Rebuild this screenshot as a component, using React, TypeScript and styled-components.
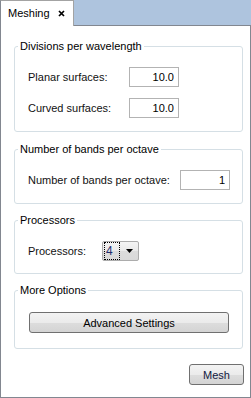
import styled, {createGlobalStyle} from 'styled-components'

const Global = createGlobalStyle`
body {
    margin: 0;
    background: #fff;
    font-family: "Liberation Sans", Arial, sans-serif;
    font-size: 11px;
    color: #000;
}
`

const App = () => {
    return (
        <>
        <Global />
        <Window>
            <TabBar>
                <Tab>
                    <span>Meshing</span>
                    <Close viewBox="0 0 7 7" width="7" height="7">
                        <path d="M1 1 L6 6 M6 1 L1 6" stroke="#000" strokeWidth="1.7" />
                    </Close>
                </Tab>
                <TabFiller />
            </TabBar>
            <Panel>
                <Group>
                    <Legend>Divisions per wavelength</Legend>
                    <Body pt={14} pb={13}>
                        <Row>
                            <Label w={101}>Planar surfaces:</Label>
                            <NumberBox readOnly value="10.0" />
                        </Row>
                        <Row>
                            <Label w={101}>Curved surfaces:</Label>
                            <NumberBox readOnly value="10.0" />
                        </Row>
                    </Body>
                </Group>
                <Group>
                    <Legend>Number of bands per octave</Legend>
                    <Body pt={14} pb={13}>
                        <Row>
                            <Label w={152}>Number of bands per octave:</Label>
                            <NumberBox readOnly value="1" />
                        </Row>
                    </Body>
                </Group>
                <Group>
                    <Legend>Processors</Legend>
                    <Body pt={14} pb={12}>
                        <Row>
                            <Label w={74}>Processors:</Label>
                            <Combo>
                                <ComboValue>4</ComboValue>
                                <svg width="7" height="4" viewBox="0 0 7 4">
                                    <path d="M0 0 H7 L3.5 4 Z" fill="#000" />
                                </svg>
                            </Combo>
                        </Row>
                    </Body>
                </Group>
                <Group>
                    <Legend>More Options</Legend>
                    <Body pt={15} pb={15}>
                        <WideButton>Advanced Settings</WideButton>
                    </Body>
                </Group>
                <Footer>
                    <MeshButton>Mesh</MeshButton>
                </Footer>
            </Panel>
        </Window>
        </>
    )
}

export default App;

const Window = styled.div`
width: 251px;
height: 398px;
display: flex;
flex-direction: column;
background: #fff;
`

const TabBar = styled.div`
display: flex;
height: 26px;
background: #aec4de;
`

const Tab = styled.div`
box-sizing: border-box;
width: 74px;
height: 26px;
display: flex;
align-items: center;
gap: 8px;
padding: 0 0 2px 7px;
background: #fff;
border: 1px solid #a3a3a3;
border-bottom: none;
border-left-color: #828790;
`

const Close = styled.svg`
margin-top: 1px;
`

const TabFiller = styled.div`
flex: 1;
border-bottom: 1px solid #828790;
`

const Panel = styled.div`
flex: 1;
display: flex;
flex-direction: column;
padding: 14px 7px 0 13px;
border: 1px solid #828790;
border-top: none;
`

const Group = styled.fieldset`
margin: 0 0 10px 0;
padding: 0;
min-width: 0;
border: 1px solid #d5dfe5;
border-radius: 3px;

&:first-child {
    margin-bottom: 11px;
}
`

const Legend = styled.legend`
margin-left: 3px;
padding: 0 2px;
line-height: 13px;
`

const Body = styled.div<{pt: number; pb: number}>`
display: flex;
flex-direction: column;
gap: 11px;
padding: ${p => p.pt}px 13px ${p => p.pb}px 13px;
`

const Row = styled.div`
display: flex;
align-items: center;
height: 20px;
`

const Label = styled.span<{w: number}>`
width: ${p => p.w}px;
flex: none;
color: #111;
`

const NumberBox = styled.input`
box-sizing: border-box;
width: 50px;
height: 20px;
margin: 0;
padding: 0 4px 0 0;
border: 1px solid #b3b3b3;
border-radius: 0;
text-align: right;
font: inherit;
color: #000;
outline: none;
`

const Combo = styled.div`
box-sizing: border-box;
width: 37px;
height: 20px;
display: flex;
align-items: center;
gap: 6px;
padding: 1px;
border: 1px solid #acacac;
border-radius: 2px;
background: linear-gradient(#f4f4f4, #e9e9e9 50%, #dcdcdc 51%, #d9d9d9);
`

const ComboValue = styled.span`
box-sizing: border-box;
width: 16px;
height: 18px;
display: flex;
align-items: center;
padding-left: 1px;
border: 1px dotted #000;
color: #1d2a6b;
font-size: 12px;
`

const buttonLook = `
box-sizing: border-box;
height: 21px;
margin: 0;
padding: 0;
border: 1px solid #707070;
border-radius: 3px;
background: linear-gradient(#f3f3f3, #ebebeb 50%, #dddddd 51%, #d4d4d4);
font: inherit;
font-size: 11px;
color: #000;
`

const WideButton = styled.button`
${buttonLook}
width: 200px;
margin-left: 1px;
`

const Footer = styled.div`
display: flex;
justify-content: flex-end;
margin-top: 5px;
margin-right: -1px;
`

const MeshButton = styled.button`
${buttonLook}
width: 55px;
color: #101840;
`
